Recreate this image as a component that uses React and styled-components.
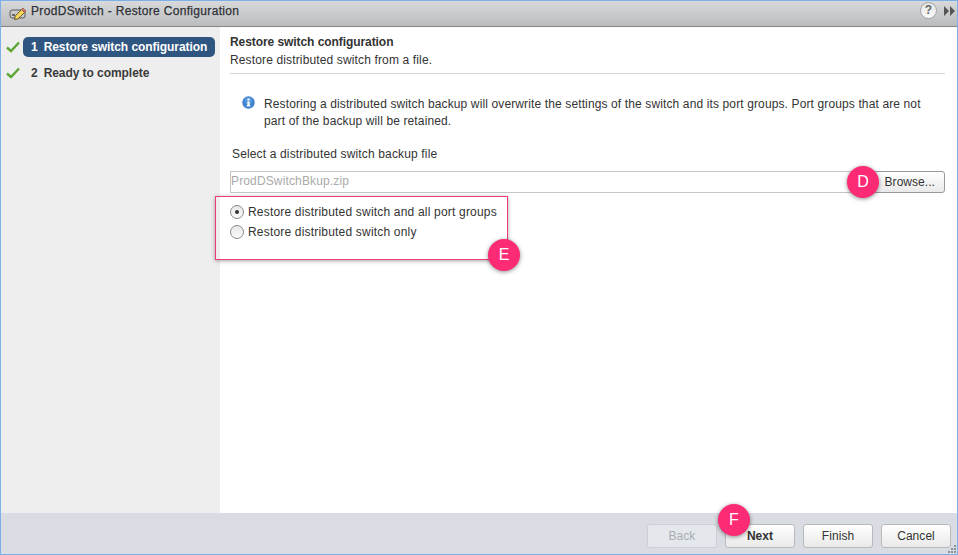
import React from "react";
import styled, { createGlobalStyle } from "styled-components";

const Global = createGlobalStyle`
  html, body {
    margin: 0;
    padding: 0;
    background: #fff;
  }
  * {
    box-sizing: border-box;
  }
`;

const Win = styled.div`
  position: relative;
  width: 958px;
  height: 555px;
  overflow: hidden;
  display: flex;
  flex-direction: column;
  border: 1px solid #7cb0e8;
  font-family: "Liberation Sans", Arial, sans-serif;
  font-size: 12px;
  color: #333;
  background: #fff;
`;

const TitleBar = styled.div`
  height: 26px;
  flex: none;
  display: flex;
  align-items: center;
  padding: 0 2px 6px 8px;
  background: linear-gradient(#d8d9db, #bbbcbe);
  border-bottom: 1px solid #85868a;
`;

const TitleText = styled.div`
  margin-left: 4px;
  font-size: 12px;
  letter-spacing: 0.33px;
  color: #2e3136;
  -webkit-text-stroke: 0.25px #2e3136;
  flex: 1;
`;

const HelpBtn = styled.div`
  width: 17px;
  height: 17px;
  border-radius: 50%;
  background: linear-gradient(#e4e4e4, #fbfbfb);
  border: 1px solid #a5a5a5;
  color: #666;
  font-size: 12px;
  font-weight: 700;
  line-height: 15px;
  text-align: center;
  margin-right: 7px;
`;

const Main = styled.div`
  flex: 1;
  min-height: 0;
  display: flex;
`;

const Side = styled.div`
  width: 219px;
  flex: none;
  background: #eeeeee;
  padding: 10px 5px 0 5px;
  display: flex;
  flex-direction: column;
  gap: 6px;
`;

const Step = styled.div`
  display: flex;
  align-items: center;
  height: 20px;
  gap: 3px;
`;

const StepLabel = styled.div`
  flex: 1;
  height: 20px;
  line-height: 20px;
  padding-left: 8px;
  border-radius: 5px;
  font-weight: 700;
  white-space: nowrap;
  letter-spacing: -0.06px;
  background: ${(props) => (props.active ? "#2f5680" : "transparent")};
  color: ${(props) => (props.active ? "#fff" : "#3a3a3a")};
  span {
    margin-right: 6px;
  }
`;

const Content = styled.div`
  flex: 1;
  padding: 8px 12px 0 10px;
`;

const Heading = styled.div`
  font-weight: 700;
  line-height: 15px;
  letter-spacing: -0.07px;
  color: #333;
`;

const SubHeading = styled.div`
  line-height: 15px;
  margin-top: 3px;
  letter-spacing: 0.14px;
`;

const Rule = styled.div`
  height: 1px;
  background: #d6d6d6;
  margin-top: 5px;
`;

const Info = styled.div`
  display: flex;
  gap: 9px;
  margin: 22px 20px 0 12px;
  line-height: 17px;
  letter-spacing: 0.125px;
  svg {
    flex: none;
  }
`;

const FileLabel = styled.div`
  margin: 17px 0 0 2px;
  line-height: 15px;
  letter-spacing: 0.15px;
`;

const FileRow = styled.div`
  display: flex;
  margin-top: 9px;
`;

const FileInput = styled.div`
  flex: 1;
  height: 22px;
  line-height: 19px;
  border: 1px solid #c6c6c6;
  border-right: 0;
  letter-spacing: 0.14px;
  color: #aaa;
`;

const Btn = styled.div`
  height: 24px;
  line-height: 22px;
  text-align: center;
  border: 1px solid #b9b9b9;
  border-radius: 3px;
  background: linear-gradient(#ffffff, #e9e9e9);
  color: #333;
  font-size: 12px;
  letter-spacing: 0.05px;
`;

const BrowseBtn = styled(Btn)`
  width: 72px;
  height: 22px;
  line-height: 20px;
  border-color: #999;
  text-align: right;
  padding-right: 9px;
`;

const Radios = styled.div`
  display: flex;
  flex-direction: column;
  margin: 11px 0 0 0;
  gap: 5px;
`;

const RadioRow = styled.div`
  display: flex;
  align-items: center;
  gap: 4px;
  height: 15px;
  letter-spacing: 0.19px;
`;

const RadioDot = styled.div`
  width: 14px;
  height: 14px;
  border-radius: 50%;
  border: 1px solid #8a8a8a;
  background: linear-gradient(#e8e8e8, #fafafa);
  display: flex;
  align-items: center;
  justify-content: center;
  &::after {
    content: "";
    display: ${(props) => (props.checked ? "block" : "none")};
    width: 4px;
    height: 4px;
    border-radius: 50%;
    background: #333;
  }
`;

const Footer = styled.div`
  height: 41px;
  flex: none;
  display: flex;
  justify-content: flex-end;
  gap: 8px;
  padding: 11px 6px 0 0;
  background: #d9dde3;
`;

const FootBtn = styled(Btn)`
  width: 70px;
  font-weight: ${(props) => (props.strong ? 700 : 400)};
  ${(props) =>
    props.disabled &&
    `
    background: #e4e7ec;
    border-color: #ccd0d6;
    color: #a9adb3;
  `}
`;

const Highlight = styled.div`
  position: absolute;
  left: 214px;
  top: 195px;
  width: 293px;
  height: 64px;
  border: 1px solid #ee3b78;
  box-shadow: 0 1px 4px rgba(0, 0, 0, 0.35);
`;

const Badge = styled.div`
  position: absolute;
  left: ${(props) => props.x}px;
  top: ${(props) => props.y}px;
  width: 32px;
  height: 32px;
  border-radius: 50%;
  background: #fd2a75;
  color: #fff;
  font-size: 16px;
  line-height: 32px;
  text-align: center;
  box-shadow: 0 1px 4px rgba(0, 0, 0, 0.45);
`;

const Grip = styled.svg`
  position: absolute;
  right: 1px;
  bottom: 1px;
`;

const Check = () => (
  <svg width="14" height="12" viewBox="0 0 14 12">
    <path d="M1 6.5 L5 10 L13 1.5" fill="none" stroke="#5da635" strokeWidth="2.4" />
  </svg>
);

const SwitchIcon = () => (
  <svg width="18" height="13" viewBox="0 0 18 13" style={{ marginTop: 6 }}>
    <rect x="1" y="3" width="15" height="8" rx="2" fill="#c9c9c9" stroke="#5a5a5a" />
    <rect x="3" y="7" width="3" height="2" fill="#666" />
    <path d="M5.5 12.5 L6.3 9 L12.5 2.5 L15.5 5.5 L9 12 Z" fill="#f6d456" stroke="#4d3f18" strokeWidth="0.8" />
    <path d="M12.5 2.5 L14 1 L17 4 L15.5 5.5 Z" fill="#d9776a" stroke="#7a4a40" strokeWidth="0.6" />
  </svg>
);

const InfoIcon = () => (
  <svg width="13" height="13" viewBox="0 0 13 13">
    <circle cx="6.5" cy="6.5" r="6.2" fill="#3f82cf" />
    <circle cx="6.5" cy="4.5" r="4" fill="#6ba6e6" opacity="0.5" />
    <rect x="5.4" y="5.4" width="2.2" height="4.6" fill="#fff" />
    <rect x="4.6" y="9.2" width="3.8" height="1.2" fill="#fff" />
    <rect x="5.4" y="2.6" width="2.2" height="1.9" fill="#fff" />
  </svg>
);

const Forward = () => (
  <svg width="11" height="10" viewBox="0 0 11 10">
    <path d="M0 0 L5 5 L0 10 Z M6 0 L11 5 L6 10 Z" fill="#555" />
  </svg>
);

const GripDots = () => (
  <Grip width="8" height="8" viewBox="0 0 8 8">
    <path d="M6 0h2v2h-2z M3 3h2v2h-2z M6 3h2v2h-2z M0 6h2v2h-2z M3 6h2v2h-2z M6 6h2v2h-2z" fill="#8b8f96" />
  </Grip>
);

const App = () => {
  return (
    <Win>
      <Global />
      <TitleBar>
        <SwitchIcon />
        <TitleText>ProdDSwitch - Restore Configuration</TitleText>
        <HelpBtn>?</HelpBtn>
        <Forward />
      </TitleBar>
      <Main>
        <Side>
          <Step>
            <Check />
            <StepLabel active>
              <span>1</span>Restore switch configuration
            </StepLabel>
          </Step>
          <Step>
            <Check />
            <StepLabel>
              <span>2</span>Ready to complete
            </StepLabel>
          </Step>
        </Side>
        <Content>
          <Heading>Restore switch configuration</Heading>
          <SubHeading>Restore distributed switch from a file.</SubHeading>
          <Rule />
          <Info>
            <InfoIcon />
            <div>
              Restoring a distributed switch backup will overwrite the settings of the switch and its port groups. Port
              groups that are not part of the backup will be retained.
            </div>
          </Info>
          <FileLabel>Select a distributed switch backup file</FileLabel>
          <FileRow>
            <FileInput>ProdDSwitchBkup.zip</FileInput>
            <BrowseBtn>Browse...</BrowseBtn>
          </FileRow>
          <Radios>
            <RadioRow>
              <RadioDot checked />
              Restore distributed switch and all port groups
            </RadioRow>
            <RadioRow>
              <RadioDot />
              Restore distributed switch only
            </RadioRow>
          </Radios>
        </Content>
      </Main>
      <Footer>
        <FootBtn disabled>Back</FootBtn>
        <FootBtn strong>Next</FootBtn>
        <FootBtn>Finish</FootBtn>
        <FootBtn>Cancel</FootBtn>
      </Footer>
      <GripDots />
      <Highlight />
      <Badge x={846} y={165}>D</Badge>
      <Badge x={487} y={238}>E</Badge>
      <Badge x={717} y={503}>F</Badge>
    </Win>
  );
};

export default App;
